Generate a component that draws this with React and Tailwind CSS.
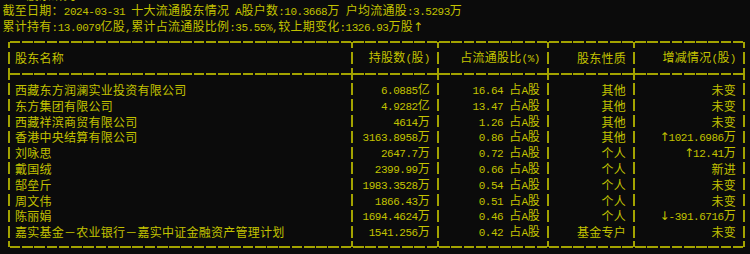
const CJK = /[\u2e80-\u9fff\u3000-\u303f\uff00-\uffef]/;
const ARROW = /[\u2190-\u2193]/;
const RUNS = /[\u2e80-\u9fff\u3000-\u303f\uff00-\uffef]+|[\u2190-\u2193]|[^\u2e80-\u9fff\u3000-\u303f\uff00-\uffef\u2190-\u2193]+/g;

function Mixed({ text }) {
  const runs = text.match(RUNS) || [];
  return (
    <span className="whitespace-pre leading-[12px]">
      {runs.map((r, i) =>
        ARROW.test(r) ? (
          <span key={i} className="font-['DejaVu_Sans',sans-serif] text-[12px] leading-[12px] tracking-[-1px]">
            {r}
          </span>
        ) : CJK.test(r) ? (
          <span key={i} className="font-['Noto_Sans_CJK_SC',sans-serif] text-[12px] leading-[12px] tracking-[0.25px]">
            {r}
          </span>
        ) : (
          <span key={i} className="font-['Liberation_Mono','Noto_Sans_CJK_SC',monospace] text-[11px] leading-[12px] tracking-[-0.475px]">
            {r}
          </span>
        )
      )}
    </span>
  );
}

const widths = ["w-[343px]", "w-[86px]", "w-[110px]", "w-[86px]", "w-[110px]"];

const rows = [
  ["西藏东方润澜实业投资有限公司", "6.0885亿", "16.64 占A股", "其他", "未变"],
  ["东方集团有限公司", "4.9282亿", "13.47 占A股", "其他", "未变"],
  ["西藏祥滨商贸有限公司", "4614万", "1.26 占A股", "其他", "未变"],
  ["香港中央结算有限公司", "3163.8958万", "0.86 占A股", "其他", "↑1021.6986万"],
  ["刘咏思", "2647.7万", "0.72 占A股", "个人", "↑12.41万"],
  ["戴国绒", "2399.99万", "0.66 占A股", "个人", "新进"],
  ["郜垒斤", "1983.3528万", "0.54 占A股", "个人", "未变"],
  ["周文伟", "1866.43万", "0.51 占A股", "个人", "未变"],
  ["陈丽娟", "1694.4624万", "0.46 占A股", "个人", "↓-391.6716万"],
  ["嘉实基金－农业银行－嘉实中证金融资产管理计划", "1541.256万", "0.42 占A股", "基金专户", "未变"],
];

// up/down stubs of a box-drawing junction
function Junction({ up, down }) {
  return (
    <div className="flex h-full w-[2px] flex-col">
      <div className="flex flex-1 flex-col justify-end">{up ? <div className="h-[6px] bg-[#a3a300]" /> : null}</div>
      <div className="flex-1">{down ? <div className="h-[6px] bg-[#a3a300]" /> : null}</div>
    </div>
  );
}

function BorderRow({ up, down }) {
  return (
    <div className="flex h-[15.8px]">
      {widths.map((w, i) => (
        <div key={i} className={`flex ${w}`}>
          <Junction up={up} down={down} />
          <div className="flex flex-1 items-center">
            <div className="h-[2px] w-full bg-[repeating-linear-gradient(90deg,#a3a300_0_10.5px,transparent_10.5px_12.25px)]" />
          </div>
        </div>
      ))}
      <Junction up={up} down={down} />
    </div>
  );
}

function TextRow({ cells }) {
  return (
    <div className="flex h-[15.8px] items-center">
      {widths.map((w, i) => (
        <div key={i} className={`flex h-full items-center ${w}`}>
          <div className="h-[12px] w-[2px] bg-[#a3a300]" />
          <div className={`flex flex-1 items-center ${i === 0 ? "justify-start pl-[5px]" : "justify-end pr-[7px]"}`}>
            <Mixed text={cells[i]} />
          </div>
        </div>
      ))}
      <div className="h-[12px] w-[2px] bg-[#a3a300]" />
    </div>
  );
}

export default function App() {
  return (
    <div className="h-[254px] w-[750px] overflow-hidden bg-[#0b0b0b] text-[#c2c200]">
      <div className="-mt-[12px] flex h-[14.6px] items-center pl-[8px]">
        <Mixed text="一 股东研究" />
      </div>
      <div className="flex h-[15.8px] items-center pl-[2.5px]">
        <Mixed text="截至日期：2024-03-31 十大流通股东情况 A股户数:10.3668万 户均流通股:3.5293万" />
      </div>
      <div className="flex h-[15.8px] items-center pl-[2.5px]">
        <Mixed text="累计持有:13.0079亿股,累计占流通股比例:35.55%,较上期变化:1326.93万股↑" />
      </div>
      <div className="ml-[8px]">
        <BorderRow down />
        <TextRow cells={["股东名称", "持股数(股)", "占流通股比(%)", "股东性质", "增减情况(股)"]} />
        <BorderRow up down />
        {rows.map((r) => (
          <TextRow key={r[0]} cells={r} />
        ))}
        <BorderRow up />
      </div>
    </div>
  );
}
